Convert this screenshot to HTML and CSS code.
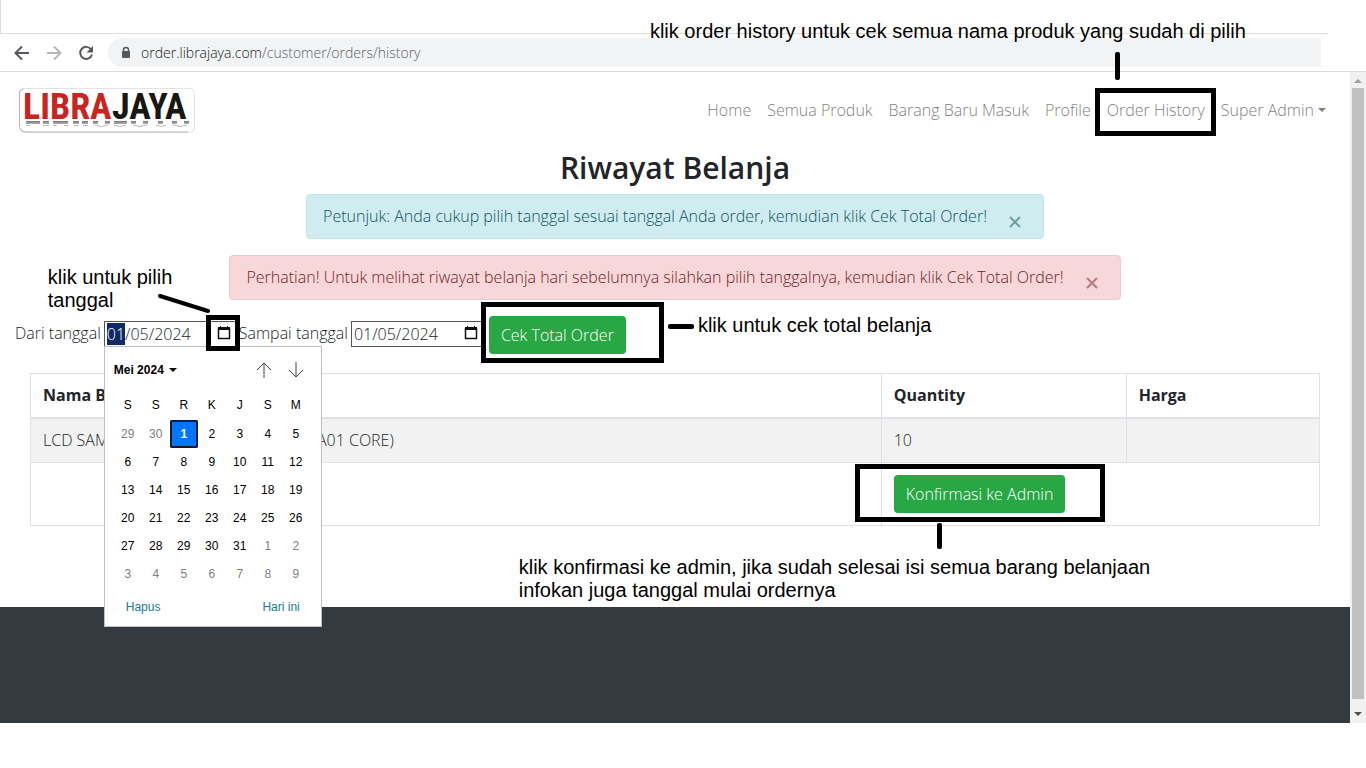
FILE: index.html
```html
<!DOCTYPE html>
<html lang="id">
<head>
<meta charset="utf-8">
<meta name="viewport" content="width=device-width, initial-scale=1">
<title>Riwayat Belanja</title>
<link rel="stylesheet" href="styles.css">
</head>
<body>
<div class="tab-strip"></div>
<div class="toolbar">
  <button class="tool" aria-label="Kembali"><svg width="16" height="16" viewBox="0 0 16 16"><path d="M15 8H2M8 1.500 1.500 8 8 14.500" fill="none" stroke="#55585c" stroke-width="2"/></svg></button>
  <button class="tool" aria-label="Maju"><svg width="16" height="16" viewBox="0 0 16 16"><path d="M1 8h13M8 1.500 14.500 8 8 14.500" fill="none" stroke="#b4b6b9" stroke-width="2"/></svg></button>
  <button class="tool" aria-label="Muat ulang"><svg width="16" height="16" viewBox="0 0 16 16"><path d="M13.200 4.500A6 6 0 1 0 14 9.500" fill="none" stroke="#55585c" stroke-width="2"/><path d="M15 1v6.500H8.500z" fill="#55585c"/></svg></button>
  <div class="address">
    <svg width="10" height="14" viewBox="0 0 10 14"><path d="M2.500 6V4a2.500 2.500 0 0 1 5 0v2" fill="none" stroke="#55585c" stroke-width="1.500"/><rect x="1" y="5" width="8" height="7" rx="1" fill="#55585c"/></svg>
    <span class="url"><span class="host">order.librajaya.com</span>/customer/orders/history</span>
  </div>
</div>

<div class="viewport">
  <div class="page">
    <nav class="navbar">
      <a class="brand" href="#" aria-label="Librajaya">
        <svg width="178" height="47" viewBox="0 0 178 47">
          <defs>
            <linearGradient id="fade" x1="0" y1="34" x2="0" y2="40" gradientUnits="userSpaceOnUse"><stop offset="0" stop-color="#777"/><stop offset="1" stop-color="#eee"/></linearGradient>
          </defs>
          <rect x="1.500" y="1.500" width="175" height="44" rx="5" fill="#fff" stroke="#e2e2e2"/>
          <path d="M1.500 40V6q0-4 4-4M2 41q1 4 6 4h162" fill="none" stroke="#b5b5b5"/>
          <text class="logo-text" x="5" y="32" fill="#c9251f">LIBRA</text>
          <text class="logo-text" x="94" y="32" fill="#171714">JAYA</text>
          <path d="M8 35.500h14M25 35.500h6M35 35.500h15M55 35.500h6M64 35.500h6M75 35.500h5M87 35.500h5M96 35.500h13M113 35.500h5M125 35.500h5M140 35.500h5M154 35.500h5M166 35.500h5" fill="none" stroke="url(#fade)" stroke-width="3"/>
          <path d="M8 38.500h4M25 38.500h6M35 38.500h4M46 38.500h4M56 38.500h5M65 38.500h5M77 38q6 3 13 0M96 38q6 3 12 0M115 38q7 3 14 0M138 38q5 3 10 0M155 38q7 3 14 0" fill="none" stroke="#bbb"/>
        </svg>
      </a>
      <ul class="menu">
        <li><a href="#">Home</a></li>
        <li><a href="#">Semua Produk</a></li>
        <li><a href="#">Barang Baru Masuk</a></li>
        <li><a href="#">Profile</a></li>
        <li class="anchor"><a href="#">Order History</a>
          <span class="frame frame-history"></span><span class="stem stem-history"></span>
          <span class="note note-history">klik order history untuk cek semua nama produk yang sudah di pilih</span></li>
        <li><a class="dropdown" href="#">Super Admin</a></li>
      </ul>
    </nav>

    <main class="content">
      <h1>Riwayat Belanja</h1>
      <div class="alert info" role="alert">Petunjuk: Anda cukup pilih tanggal sesuai tanggal Anda order, kemudian klik Cek Total Order!
        <button class="close" aria-label="Tutup"><svg width="12" height="12" viewBox="0 0 12 12"><path d="M1 1l10 10M11 1 1 11"/></svg></button></div>
      <div class="alert danger" role="alert">Perhatian! Untuk melihat riwayat belanja hari sebelumnya silahkan pilih tanggalnya, kemudian klik Cek Total Order!
        <button class="close" aria-label="Tutup"><svg width="12" height="12" viewBox="0 0 12 12"><path d="M1 1l10 10M11 1 1 11"/></svg></button></div>

      <form class="filter">
        <label for="from">Dari tanggal</label>
        <div class="date-field">
          <input id="from" type="text" value="01/05/2024" autofocus>
          <button type="button" class="pick" aria-label="Pilih tanggal awal"><svg width="14" height="16" viewBox="0 0 14 16"><path d="M1.500 3.500h11v10h-11z" fill="none" stroke="#111" stroke-width="1.500"/><path d="M1 2h12v3H1zM3 1h1v2H3zM10 1h1v2h-1z" fill="#111"/></svg></button>
          <span class="frame frame-pick"></span>
          <svg class="pointer" width="56" height="24" viewBox="0 0 56 24"><path d="M3 4 51 19" stroke="#000" stroke-width="4" stroke-linecap="round"/></svg>
          <span class="note note-pick">klik untuk pilih<br>tanggal</span>
          <div class="calendar">
            <div class="cal-head">
              <button type="button" class="month">Mei 2024 <span class="caret"></span></button>
              <button type="button" class="step" aria-label="Bulan sebelumnya"><svg width="16" height="16" viewBox="0 0 16 16"><path d="M8 16V1M1 8l7-7 7 7"/></svg></button>
              <button type="button" class="step" aria-label="Bulan berikutnya"><svg width="16" height="16" viewBox="0 0 16 16"><path d="M8 0v15M1 8l7 7 7-7"/></svg></button>
            </div>
            <table class="days">
              <thead><tr><th>S</th><th>S</th><th>R</th><th>K</th><th>J</th><th>S</th><th>M</th></tr></thead>
              <tbody>
                <tr><td class="off">29</td><td class="off">30</td><td class="today">1</td><td>2</td><td>3</td><td>4</td><td>5</td></tr>
                <tr><td>6</td><td>7</td><td>8</td><td>9</td><td>10</td><td>11</td><td>12</td></tr>
                <tr><td>13</td><td>14</td><td>15</td><td>16</td><td>17</td><td>18</td><td>19</td></tr>
                <tr><td>20</td><td>21</td><td>22</td><td>23</td><td>24</td><td>25</td><td>26</td></tr>
                <tr><td>27</td><td>28</td><td>29</td><td>30</td><td>31</td><td class="off">1</td><td class="off">2</td></tr>
                <tr><td class="off">3</td><td class="off">4</td><td class="off">5</td><td class="off">6</td><td class="off">7</td><td class="off">8</td><td class="off">9</td></tr>
              </tbody>
            </table>
            <div class="cal-foot"><button type="button">Hapus</button><button type="button">Hari ini</button></div>
          </div>
        </div>
        <label for="to">Sampai tanggal</label>
        <div class="date-field">
          <input id="to" type="text" value="01/05/2024">
          <button type="button" class="pick" aria-label="Pilih tanggal akhir"><svg width="14" height="16" viewBox="0 0 14 16"><path d="M1.500 3.500h11v10h-11z" fill="none" stroke="#111" stroke-width="1.500"/><path d="M1 2h12v3H1zM3 1h1v2H3zM10 1h1v2h-1z" fill="#111"/></svg></button>
        </div>
        <div class="anchor submit">
          <button type="button" class="btn">Cek Total Order</button>
          <span class="frame frame-total"></span><span class="dash"></span>
          <span class="note note-total">klik untuk cek total belanja</span>
        </div>
      </form>

      <div class="table-wrap">
        <table class="orders">
          <colgroup><col class="c-name"><col class="c-qty"><col class="c-price"></colgroup>
          <thead><tr><th>Nama Barang</th><th>Quantity</th><th>Harga</th></tr></thead>
          <tbody>
            <tr class="striped"><td>LCD SAMSUNG A013 / M013 (GALAXY A01 CORE)</td><td>10</td><td></td></tr>
            <tr><td></td><td colspan="2"><div class="anchor confirm">
              <button type="button" class="btn">Konfirmasi ke Admin</button>
              <span class="frame frame-confirm"></span><span class="stem stem-confirm"></span>
              <span class="note note-confirm">klik konfirmasi ke admin, jika sudah selesai isi semua barang belanjaan<br>infokan juga tanggal mulai ordernya</span>
            </div></td></tr>
          </tbody>
        </table>
      </div>
    </main>
    <footer class="footer"></footer>
  </div>
  <div class="scrollbar"><span class="up"></span><span class="thumb"></span><span class="down"></span></div>
</div>
<script src="script.js"></script>
</body>
</html>
```
FILE: styles.css
```css
* { box-sizing: border-box; }
body {
  margin: 0;
  min-height: 100vh;
  display: flex;
  flex-direction: column;
  background: #fff;
  color: #212529;
  font: 300 16px/23px "Open Sans", "Noto Sans", sans-serif;
}
button { border: 0; padding: 0; background: none; font: inherit; color: inherit; }
a { color: inherit; text-decoration: none; }
svg { display: block; }

.tab-strip { height: 34px; margin-right: 38px; border: solid #dcdcdc; border-width: 0 0 1px 1px; }
.toolbar {
  display: flex;
  align-items: center;
  gap: 16px;
  height: 38px;
  padding: 0 45px 0 14px;
  border-bottom: 1px solid #dcdcdc;
}
.address {
  flex: 1;
  display: flex;
  align-items: center;
  gap: 10px;
  height: 29px;
  margin-left: -2px;
  padding-left: 13px;
  border-radius: 15px 0 0 15px;
  background: #f1f3f4;
}
.url { font-size: 14px; color: #5f6368; }
.host { color: #202124; }

.viewport { flex: 1; display: flex; margin-bottom: 45px; }
.page { flex: 1; display: flex; flex-direction: column; }
.anchor { position: relative; }

.navbar { display: flex; align-items: center; justify-content: space-between; height: 77px; padding: 0 16px 0 18px; }
.menu { display: flex; list-style: none; margin: 0; padding: 0; color: #7f7f7f; }
.menu a { display: block; padding: 8px; }
.dropdown::after {
  content: "";
  display: inline-block;
  margin-left: 4px;
  vertical-align: 4px;
  border: 4px solid transparent;
  border-top-color: currentColor;
  border-bottom: 0;
}
.logo-text { font: 700 36px "Liberation Sans Narrow", "Roboto Condensed", "DejaVu Sans Condensed", sans-serif; }

.content { padding: 0 15px; }
h1 { margin: 0 0 7px; text-align: center; font-size: 30px; line-height: 38px; font-weight: 600; }
.alert {
  position: relative;
  width: fit-content;
  margin: 0 auto 16px;
  padding: 10px 56px 10px 16px;
  border: 1px solid;
  border-radius: 4px;
}
.info { color: #0c5460; background: #d1ecf1; border-color: #bee5eb; }
.danger { color: #721c24; background: #f8d7da; border-color: #efc8cd; margin-bottom: 13px; }
.close { position: absolute; right: 22px; top: 21px; opacity: .5; }
.close path { stroke: currentColor; stroke-width: 2; }

.filter { display: flex; align-items: center; gap: 3px; }
.date-field { position: relative; display: flex; }
.date-field input {
  width: 132px;
  height: 26px;
  padding: 0 2px;
  border: 1px solid #555;
  background: #fff;
  color: #212529;
  font: inherit;
  outline: 0;
}
.date-field input::selection { background: #0f2a66; color: #fff; }
.pick { position: absolute; right: 5px; top: 4px; }
.btn { height: 38px; padding: 0 12px; border-radius: 4px; background: #28a745; color: #fff; white-space: nowrap; }
.submit { margin: 3px 0 0 3px; }

.calendar {
  position: absolute;
  z-index: 2;
  left: 0;
  top: 25px;
  width: 218px;
  padding: 8px 9px;
  border: 1px solid #bfbfbf;
  background: #fff;
  color: #000;
  font: 400 12px/16px "Liberation Sans", Arial, sans-serif;
}
.cal-head { display: flex; align-items: center; gap: 16px; height: 31px; padding-right: 8px; }
.month { flex: 1; text-align: left; font-weight: 700; }
.caret { display: inline-block; margin-left: 2px; vertical-align: 2px; border: 4px solid transparent; border-top-color: #000; border-bottom: 0; }
.step path { fill: none; stroke: #444; }
.days { border-spacing: 0; }
.days th, .days td { width: 28px; height: 28px; padding: 0; text-align: center; font-weight: 400; }
.days th { height: 34px; padding-top: 4px; }
.days .off { color: #808080; }
.days .today { background: #0075ff; color: #fff; font-weight: 700; border-radius: 2px; box-shadow: inset 0 0 0 2px #101a33; }
.cal-foot { display: flex; justify-content: space-between; margin-top: 7px; padding: 4px 12px 3px; color: #1a7a94; }

.table-wrap { padding: 0 15px; margin-top: 19px; }
.orders { width: 100%; border-collapse: collapse; table-layout: fixed; }
.orders th, .orders td { padding: 10px 12px; border: 1px solid #dee2e6; text-align: left; }
.orders th { border-bottom-width: 2px; font-weight: 700; }
.striped { background: #f2f2f2; }
.c-name { width: 66%; }
.c-qty { width: 19%; }
.c-price { width: 15%; }
.confirm { width: fit-content; }
.confirm .btn { display: block; margin: 2px 0; }
.footer { flex: 1; min-height: 116px; margin-top: 81px; background: #343a40; }

.scrollbar { display: flex; flex-direction: column; align-items: center; justify-content: space-between; width: 16px; padding: 7px 0; background: #f1f1f1; }
.up, .down { border: 4px solid transparent; }
.up { border-bottom-color: #a0a0a0; border-top: 0; }
.down { border-top-color: #505050; border-bottom: 0; }
.thumb { flex: 1; width: 12px; margin: 5px 0 13px; background: #c1c1c1; }

.frame { position: absolute; z-index: 3; border: 5px solid #000; pointer-events: none; }
.stem, .dash { position: absolute; background: #000; border-radius: 2px; }
.note { position: absolute; z-index: 3; color: #000; font: 400 20px/23px "Liberation Sans", Arial, sans-serif; white-space: nowrap; }
.frame-history { inset: -3px -3px -6px -4px; }
.stem-history { width: 5px; height: 28px; left: 16px; top: -39px; }
.note-history { right: -33px; top: -71px; }
.frame-pick { width: 34px; height: 36px; right: -4px; top: -6px; }
.pointer { position: absolute; left: 53px; top: -29px; }
.note-pick { left: -56px; top: -55px; }
.frame-total { width: 183px; height: 61px; left: -8px; top: -14px; }
.dash { width: 26px; height: 5px; left: 179px; top: 8px; }
.note-total { left: 209px; top: -2px; }
.frame-confirm { width: 250px; height: 58px; left: -39px; top: -11px; }
.stem-confirm { width: 5px; height: 26px; left: 43px; top: 48px; }
.note-confirm { left: -375px; top: 81px; }
```
FILE: script.js
```js
// Select the day part of the start date when the page opens.
const from = document.getElementById("from");
from.focus();
from.setSelectionRange(0, 2);
```
